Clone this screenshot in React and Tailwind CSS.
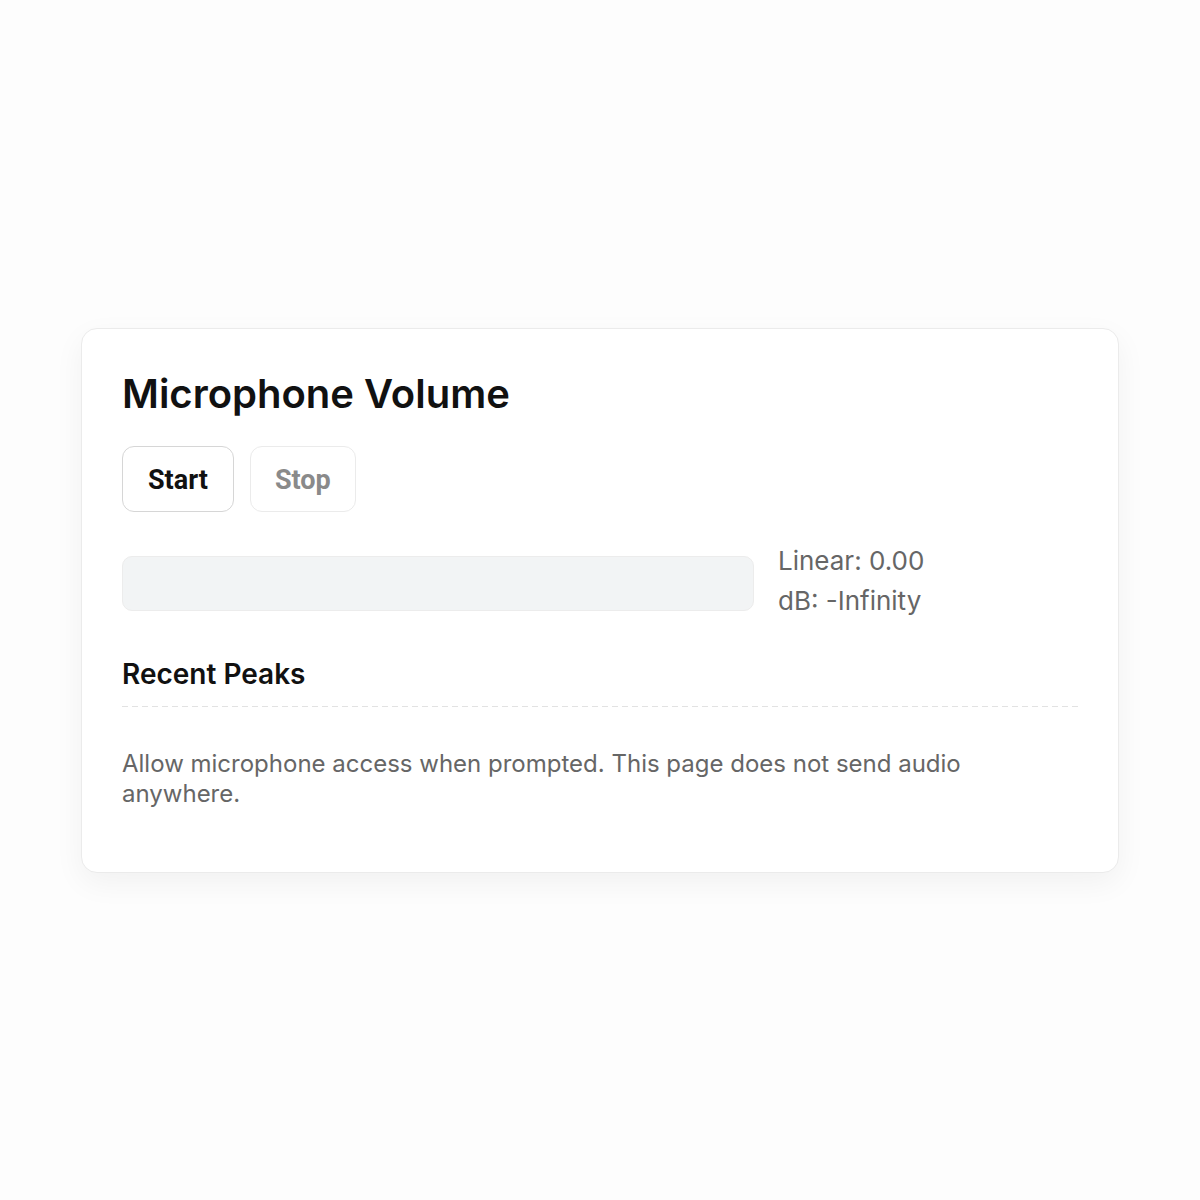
import React from 'react'

export default function App() {
  return (
    <div className="flex min-h-screen items-center justify-center bg-[#fdfdfd] font-['Inter','Noto_Sans',sans-serif]">
      <div className="w-[1038px] rounded-2xl border border-[#ebebeb] bg-white px-10 pt-[41px] pb-[63px] shadow-[0_10px_30px_rgba(0,0,0,0.05)]">
        <h1 className="text-[40px] font-semibold leading-[48px] text-[#111]">
          Microphone Volume
        </h1>

        <div className="mt-[28px] flex gap-4 font-['Roboto',sans-serif]">
          <button className="h-[66px] rounded-xl border border-[#d6d6d6] bg-white px-[25px] pt-1 text-[27px] font-bold text-[#111]">
            Start
          </button>
          <button
            disabled
            className="h-[66px] rounded-xl border border-[#ebebeb] bg-white px-6 pt-1 text-[27px] font-bold text-[#8a8a8a]"
          >
            Stop
          </button>
        </div>

        <div className="mt-[29px] grid grid-cols-[1fr_300px] items-start gap-6">
          <div className="mt-[15px] h-[55px] rounded-[10px] border border-[#ececec] bg-[#f2f4f5]" />
          <div className="text-[26px] leading-[40px] text-[#666]">
            <div>Linear: 0.00</div>
            <div>dB: -Infinity</div>
          </div>
        </div>

        <h2 className="mt-[36px] text-[28px] font-semibold leading-[34px] text-[#111]">
          Recent Peaks
        </h2>
        <div className="mt-[15px] h-px bg-[repeating-linear-gradient(90deg,#e2e2e2_0_6px,transparent_6px_10px)]" />

        <p className="mt-[42px] text-[24px] leading-[30px] text-[#666]">
          Allow microphone access when prompted. This page does not send audio anywhere.
        </p>
      </div>
    </div>
  )
}
